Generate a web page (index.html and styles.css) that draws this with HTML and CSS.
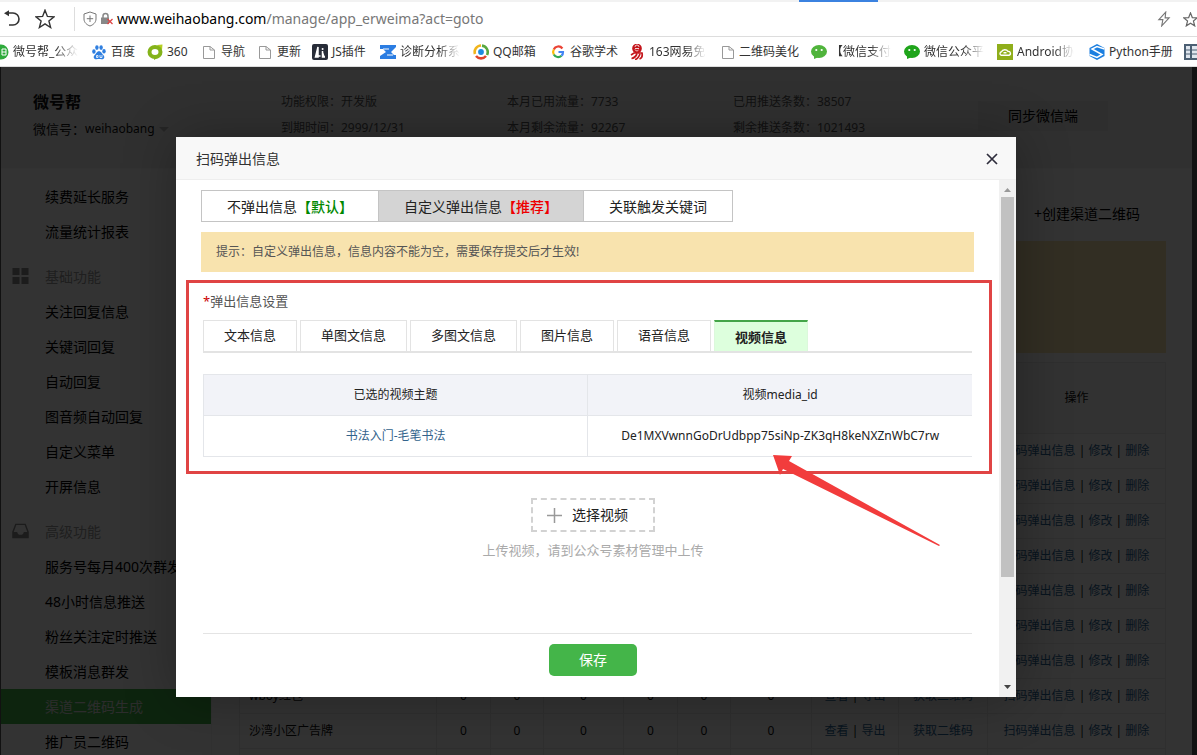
FILE: index.html
```html
<!DOCTYPE html>
<html lang="zh-CN">
<head>
<meta charset="utf-8">
<title>扫码弹出信息</title>
<link rel="stylesheet" href="styles.css">
</head>
<body>
<header class="browser">
  <div class="tabstrip"><span class="tabstrip-active"></span></div>
  <div class="address">
    <button class="icon-btn" aria-label="返回"><svg width="20" height="20" viewBox="0 0 20 20"><path d="M5 4H12a6 6 0 0 1 0 12H8" fill="none" stroke="#333" stroke-width="1.6"/><path d="M3 4.3L8 1.3V7.3Z" fill="#333"/></svg></button>
    <button class="icon-btn" aria-label="收藏"><svg width="20" height="20" viewBox="0 0 20 20"><path d="M10 1.2l2.4 6.2 6.600.4-5.100 4.200 1.700 6.500L10 14.900l-5.600 3.600 1.700-6.500L1 7.800l6.600-.4z" fill="none" stroke="#333" stroke-width="1.4"/></svg></button>
    <span class="divider"></span>
    <svg class="shield" width="14" height="16" viewBox="0 0 14 16"><path d="M7 1L13 3V8C13 11.500 10 14 7 15C4 14 1 11.500 1 8V3Z" fill="none" stroke="#777"/><path d="M7 4.500V11M3.800 7.700H10.200" stroke="#777"/></svg>
    <svg class="lock" width="14" height="14" viewBox="0 0 14 14"><path d="M3 6V4a2.500 2.500 0 0 1 5 0V6" fill="none" stroke="#888" stroke-width="1.500"/><rect x="1" y="5.500" width="8" height="6.500" fill="#888"/><path d="M7.500 7L12.500 12M12.500 7L7.500 12" stroke="#d44" stroke-width="1.300"/></svg>
    <span class="url"><b>www.weihaobang.com</b>/manage/app_erweima?act=goto</span>
    <svg class="flash" width="14" height="16" viewBox="0 0 12 14"><path d="M7.500 1L1.500 7.500H5L4 13L10.500 6H7Z" fill="none" stroke="#777"/></svg>
    <svg class="star-end" width="15" height="15" viewBox="0 0 20 20"><path d="M10 1.200l2.400 6.200 6.600.4-5.100 4.200 1.700 6.500L10 14.900l-5.600 3.600 1.700-6.500L1 7.800l6.600-.4z" fill="none" stroke="#666" stroke-width="1.600"/></svg>
  </div>
  <nav class="bookmarks">
    <a class="bm" href="#"><svg viewBox="0 0 16 16"><circle cx="8" cy="8" r="7.500" fill="#2eab3c"/><path d="M9 5h4v6H9zM9 8h4" fill="none" stroke="#fff"/></svg><span class="fade">微号帮_公众</span></a>
    <a class="bm" href="#"><svg viewBox="0 0 16 16" fill="#2f7fe0"><ellipse cx="2.900" cy="7.500" rx="1.700" ry="2.200"/><ellipse cx="5.900" cy="3.600" rx="1.700" ry="2.300"/><ellipse cx="10.100" cy="3.600" rx="1.700" ry="2.300"/><ellipse cx="13" cy="7.300" rx="1.700" ry="2.200"/><path d="M8 7.200C5.500 7.200 5.300 9.800 3.700 11C1.500 13 3.300 15.800 5.600 15.200C7.500 14.800 8.500 14.800 10.400 15.200C13 15.800 14.400 13 12.300 11C10.600 9.600 10.400 7.200 8 7.200Z"/><path d="M5.500 11.500h1.500v2H5.500zM9 11v2.500h2V11" fill="none" stroke="#fff" stroke-width=".8"/></svg><span>百度</span></a>
    <a class="bm" href="#"><svg viewBox="0 0 16 16"><path d="M10 1L15.500 .5L15 6Z" fill="#b6cf22"/><ellipse cx="8" cy="8" rx="5.500" ry="5" fill="#fff" stroke="#84b31a" stroke-width="4"/><path d="M7 13L7 16L12 13Z" fill="#84b31a"/></svg><span>360</span></a>
    <a class="bm" href="#"><svg viewBox="0 0 16 16"><path d="M2.500 2.500H9L13.500 6V14.500H2.500ZM9 2.500V6H13.500" fill="#fff" stroke="#999"/></svg><span>导航</span></a>
    <a class="bm" href="#"><svg viewBox="0 0 16 16"><path d="M2.500 2.500H9L13.500 6V14.500H2.500ZM9 2.500V6H13.500" fill="#fff" stroke="#999"/></svg><span>更新</span></a>
    <a class="bm" href="#"><svg viewBox="0 0 16 16"><rect width="16" height="16" rx="2" fill="#272c38"/><path d="M3.500 13L6 3V13ZM6 12H8.500M10.500 7V13H13" stroke="#fff" stroke-width="1.500" fill="#fff"/><circle cx="10.600" cy="5" r="1" fill="#fff"/></svg><span>JS插件</span></a>
    <a class="bm" href="#"><svg viewBox="0 0 16 16"><path d="M0 1H16V3L11 8L14 11H16V15H0V12L6 8L3 5H0Z" fill="#2b7de2"/><path d="M3 5H9M7 11H13" stroke="#fff"/></svg><span class="fade">诊断分析系</span></a>
    <a class="bm" href="#"><svg viewBox="0 0 16 16" fill="none" stroke-width="2.600"><circle cx="8" cy="8" r="2.900" fill="#1c8be0"/><path d="M2 10A6.500 6.500 0 0 1 8 1.500" stroke="#f1b51c"/><path d="M9 1.600A6.500 6.500 0 0 1 14 11" stroke="#58a83e"/><path d="M3 12A6.500 6.500 0 0 0 13 12" stroke="#df442c"/></svg><span>QQ邮箱</span></a>
    <a class="bm" href="#"><svg viewBox="0 0 16 16" fill="none" stroke-width="2.200"><path d="M12.400 4.500A5 5 0 0 0 3.800 5.500" stroke="#ea4335"/><path d="M3.800 5.500A5 5 0 0 0 3.800 10.500" stroke="#fbbc05"/><path d="M3.800 10.500A5 5 0 0 0 11.500 11.800" stroke="#34a853"/><path d="M11.500 11.800A5 5 0 0 0 13 8H8.500" stroke="#4285f4"/></svg><span>谷歌学术</span></a>
    <a class="bm" href="#"><svg viewBox="0 0 16 16" fill="none" stroke="#c4161c" stroke-width="1.700"><circle cx="8" cy="4.500" r="4" fill="#c4161c"/><path d="M6 4.500H10M6 3A2 2 0 0 1 10 3M6 5.500A2 2 0 0 0 9.500 6" stroke="#fff" stroke-width=".8"/><path d="M2 11L5 9H13Q14 14 10.500 15M8 10Q6 14 2.500 14.500M11 10Q9 15 6 15.500"/></svg><span class="fade">163网易免</span></a>
    <a class="bm" href="#"><svg viewBox="0 0 16 16"><path d="M3.500 2.500H10L14.500 6V14.500H3.500ZM10 2.500V6H14.500" fill="#fff" stroke="#999"/></svg><span>二维码美化</span></a>
    <a class="bm" href="#"><svg viewBox="0 0 16 16"><ellipse cx="8" cy="7.500" rx="8" ry="6.500" fill="#50b43c"/><path d="M3 11L3 15L8 13Z" fill="#50b43c"/><circle cx="5.300" cy="6" r="1.100" fill="#fff"/><circle cx="10.700" cy="6" r="1.100" fill="#fff"/></svg><span class="fade">【微信支付</span></a>
    <a class="bm" href="#"><svg viewBox="0 0 16 16"><ellipse cx="8" cy="7.500" rx="8" ry="6.500" fill="#1fa51b"/><path d="M3 11L3 15L8 13Z" fill="#1fa51b"/><circle cx="5.300" cy="6" r="1.100" fill="#fff"/><circle cx="10.700" cy="6" r="1.100" fill="#fff"/></svg><span class="fade">微信公众平</span></a>
    <a class="bm" href="#"><svg viewBox="0 0 16 16"><rect width="16" height="16" fill="#8fae1b"/><path d="M4 11.200A1.800 1.800 0 0 1 4.500 7.800A3.500 3 0 0 1 11 7.500A1.900 1.900 0 0 1 12 11.200ZM6.500 8.800H9.500" fill="none" stroke="#fff" stroke-width="1.400"/></svg><span class="fade">Android协</span></a>
    <a class="bm" href="#"><svg viewBox="0 0 16 16"><path d="M8 0L15.500 4V12L8 16L.5 12V4Z" fill="#1c7fe0"/><path d="M15.500 5L8 2.500L3 5L13 10.500L8 13.500L.5 10.500" fill="none" stroke="#fff" stroke-width="1.500"/></svg><span>Python手册</span></a>
    <a class="bm" href="#" aria-label="书签"><svg viewBox="0 0 16 16"><rect width="16" height="16" fill="#4b5f73"/><path d="M2 2h4v12H2zM8 2h6v12H8z" fill="#dfe6ee"/><path d="M2 6H14M2 10H14" stroke="#4b5f73"/></svg></a>
  </nav>
</header>

<div class="viewport">
  <div class="page">
    <section class="account">
      <div class="account-id"><h1>微号帮</h1><p>微信号：<span class="wxid">weihaobang</span> <span class="caret"></span></p></div>
      <dl><div>功能权限：开发版</div><div>到期时间：2999/12/31</div></dl>
      <dl><div>本月已用流量：7733</div><div>本月剩余流量：92267</div></dl>
      <dl><div>已用推送条数：38507</div><div>剩余推送条数：1021493</div></dl>
      <button class="sync">同步微信端</button>
    </section>
    <div class="columns">
      <nav class="side">
        <a href="#">续费延长服务</a>
        <a href="#">流量统计报表</a>
        <h2><svg width="16" height="16" viewBox="0 0 16 16" fill="#8a8a8a"><path d="M0 0h7v7H0zM9 0h7v7H9zM0 9h7v7H0zM9 9h7v7H9z"/></svg>基础功能</h2>
        <a href="#">关注回复信息</a>
        <a href="#">关键词回复</a>
        <a href="#">自动回复</a>
        <a href="#">图音频自动回复</a>
        <a href="#">自定义菜单</a>
        <a href="#">开屏信息</a>
        <h2><svg width="18" height="16" viewBox="0 0 18 16"><path d="M4 1H14L17 9V15H1V9Z" fill="none" stroke="#8a8a8a" stroke-width="1.500"/><path d="M1 9H5.500Q6 12 9 12T12.500 9H17V15H1Z" fill="#8a8a8a"/></svg>高级功能</h2>
        <a href="#">服务号每月400次群发</a>
        <a href="#">48小时信息推送</a>
        <a href="#">粉丝关注定时推送</a>
        <a href="#">模板消息群发</a>
        <a href="#" class="on">渠道二维码生成</a>
        <a href="#">推广员二维码</a>
      </nav>
      <main class="main">
        <div class="toolbar"><button class="create">+创建渠道二维码</button></div>
        <div class="notice"></div>
        <table class="list">
          <colgroup><col><col class="w54"><col class="w53"><col class="w80"><col class="w54"><col class="w53"><col class="w81"><col class="w87"><col class="w89"><col class="w178"></colgroup>
          <thead><tr><th></th><th></th><th></th><th></th><th></th><th></th><th></th><th></th><th></th><th>操作</th></tr></thead>
          <tbody>
            <tr><td></td><td></td><td></td><td></td><td></td><td></td><td></td><td></td><td></td><td><a href="#">扫码弹出信息</a> | <a href="#">修改</a> | <a href="#">删除</a></td></tr>
            <tr><td></td><td></td><td></td><td></td><td></td><td></td><td></td><td></td><td></td><td><a href="#">扫码弹出信息</a> | <a href="#">修改</a> | <a href="#">删除</a></td></tr>
            <tr><td></td><td></td><td></td><td></td><td></td><td></td><td></td><td></td><td></td><td><a href="#">扫码弹出信息</a> | <a href="#">修改</a> | <a href="#">删除</a></td></tr>
            <tr><td></td><td></td><td></td><td></td><td></td><td></td><td></td><td></td><td></td><td><a href="#">扫码弹出信息</a> | <a href="#">修改</a> | <a href="#">删除</a></td></tr>
            <tr><td></td><td></td><td></td><td></td><td></td><td></td><td></td><td></td><td></td><td><a href="#">扫码弹出信息</a> | <a href="#">修改</a> | <a href="#">删除</a></td></tr>
            <tr><td></td><td></td><td></td><td></td><td></td><td></td><td></td><td></td><td></td><td><a href="#">扫码弹出信息</a> | <a href="#">修改</a> | <a href="#">删除</a></td></tr>
            <tr><td></td><td></td><td></td><td></td><td></td><td></td><td></td><td></td><td></td><td><a href="#">扫码弹出信息</a> | <a href="#">修改</a> | <a href="#">删除</a></td></tr>
            <tr><td>wboy红包</td><td>0</td><td>0</td><td>0</td><td>0</td><td>0</td><td>0</td><td><a href="#">查看</a> | <a href="#">导出</a></td><td><a href="#">获取二维码</a></td><td><a href="#">扫码弹出信息</a> | <a href="#">修改</a> | <a href="#">删除</a></td></tr>
            <tr><td>沙湾小区广告牌</td><td>0</td><td>0</td><td>0</td><td>0</td><td>0</td><td>0</td><td><a href="#">查看</a> | <a href="#">导出</a></td><td><a href="#">获取二维码</a></td><td><a href="#">扫码弹出信息</a> | <a href="#">修改</a> | <a href="#">删除</a></td></tr>
            <tr><td></td><td></td><td></td><td></td><td></td><td></td><td></td><td></td><td></td><td></td></tr>
          </tbody>
        </table>
      </main>
    </div>
  </div>

  <div class="shade">
    <section class="dialog" role="dialog" aria-labelledby="dlg-title">
      <header class="dialog-head">
        <h2 id="dlg-title">扫码弹出信息</h2>
        <button class="close" aria-label="关闭"><svg width="12" height="12" viewBox="0 0 12 12"><path d="M1 1L11 11M11 1L1 11" stroke="#2e2d3c" stroke-width="1.700"/></svg></button>
      </header>
      <div class="dialog-body">
        <div class="content">
          <div class="segment">
            <button>不弹出信息<b class="green">【默认】</b></button>
            <button class="on">自定义弹出信息<b class="red">【推荐】</b></button>
            <button>关联触发关键词</button>
          </div>
          <p class="tip">提示：自定义弹出信息，信息内容不能为空，需要保存提交后才生效!</p>
          <div class="form">
            <p class="label"><i>*</i>弹出信息设置</p>
            <div class="tabs">
              <button>文本信息</button>
              <button>单图文信息</button>
              <button>多图文信息</button>
              <button>图片信息</button>
              <button>语音信息</button>
              <button class="on">视频信息</button>
            </div>
            <table class="media">
              <thead><tr><th>已选的视频主题</th><th>视频media_id</th></tr></thead>
              <tbody><tr><td><a href="#">书法入门-毛笔书法</a></td><td>De1MXVwnnGoDrUdbpp75siNp-ZK3qH8keNXZnWbC7rw</td></tr></tbody>
            </table>
            <div class="picker">
              <button class="pick"><svg width="15" height="15" viewBox="0 0 15 15"><path d="M7.500 0V15M0 7.500H15" stroke="#999" stroke-width="1.500"/></svg>选择视频</button>
              <p>上传视频，请到公众号素材管理中上传</p>
            </div>
            <div class="actions"><button class="save">保存</button></div>
          </div>
        </div>
        <div class="scroll">
          <svg width="9" height="5" viewBox="0 0 9 5"><path d="M1 5L4.500 1L8 5Z" fill="#999"/></svg>
          <span class="thumb"></span>
          <svg class="down" width="9" height="5" viewBox="0 0 9 5"><path d="M1 0L4.500 4L8 0Z" fill="#444"/></svg>
        </div>
      </div>
      <div class="mark"></div>
      <svg class="arrow" width="168" height="92" viewBox="0 0 168 92"><path d="M0 0L19 1L16 6L167 90L166 91L10 14L7 20Z" fill="#f23c3c"/></svg>
    </section>
  </div>
</div>
</body>
</html>
```

FILE: styles.css
```css
* { box-sizing: border-box; }
body, h1, h2, p, dl { margin: 0; }
body {
  display: flex;
  flex-direction: column;
  height: 100vh;
  overflow: hidden;
  background: #fff;
  color: #333;
  font-family: "Noto Sans", "Noto Sans CJK SC", sans-serif;
  font-size: 12px;
  line-height: 20px;
}
button { font: inherit; color: inherit; padding: 0; border: 0; background: none; }
a { color: inherit; text-decoration: none; }
table { border-collapse: collapse; width: 100%; table-layout: fixed; }
th { font-weight: normal; }

/* Browser bars */
.browser { flex: none; }
.tabstrip { display: flex; justify-content: flex-end; height: 2px; background: #f2f2f2; padding-right: 319px; }
.tabstrip-active { width: 79px; background: #3b82e0; }
.address { display: flex; align-items: center; height: 35px; border-bottom: 1px solid #ddd; overflow: hidden; }
.icon-btn { display: flex; margin-left: 1px; margin-right: 13px; }
.divider { width: 1px; height: 24px; margin-left: 6px; background: #ddd; }
.shield { margin-left: 8px; }
.lock { margin: 0 3px; }
.url { flex: 1; font-size: 14px; color: #777; }
.url b { font-weight: normal; color: #000; }
.flash { margin-right: 12px; }
.star-end { flex: none; margin-right: -1px; }
.bookmarks {
  display: grid;
  grid-template-columns: 98px 56px 54px 56px 55px 68px 93px 77px 79px 90px 92px 93px 93px 92px 95px 16px;
  height: 30px;
  margin-left: -7px;
  align-items: center;
  border-bottom: 1px solid #ddd;
  overflow: hidden;
}
.bm { display: flex; align-items: center; gap: 4px; white-space: nowrap; }
.bm svg { flex: none; width: 16px; height: 16px; }
.bm .fade { mask-image: linear-gradient(to right, #000 65%, transparent); }

/* Page behind the dialog */
.viewport { position: relative; flex: 1; min-height: 0; background: #121212; padding-right: 5px; overflow: hidden; }
.page { background: #fff; border-left: 1px solid #555; }
.account { display: flex; height: 102px; padding: 25px 0 0 32px; background: #f0f0f0; border-bottom: 1px solid #fafafa; }
.account-id { width: 248px; color: #111; font-size: 13px; line-height: 34px; }
.account-id h1 { font-size: 16px; line-height: 20px; }
.account-id p { display: flex; align-items: center; gap: 4px; }
.wxid { font-size: 12px; margin-left: -4px; }
.caret { border: 5px solid transparent; border-top-color: #bbb; border-bottom: 0; }
.account dl { width: 226px; line-height: 26px; margin-top: -3px; color: #555; }
.sync { width: 130px; height: 30px; margin: 9px 0 0 19px; background: #e4e4e4; color: #000; font-size: 14px; }
.columns { display: flex; }
.side { flex: none; width: 211px; padding-top: 10px; border-right: 1px solid #f2f2f2; font-size: 14px; line-height: 35px; }
.side a { display: block; height: 35px; padding-left: 44px; color: #000; white-space: nowrap; }
.side h2 { display: flex; align-items: center; gap: 16px; height: 35px; margin-top: 10px; padding-left: 11px; color: #999; font-size: 14px; font-weight: normal; }
.side h2 svg { width: 17px; margin-bottom: 2px; }
.side .on { background: #44b549; color: #ddd; }
.main { flex: 1; min-width: 0; padding: 30px 26px 0 27px; }
.toolbar { display: flex; justify-content: flex-end; height: 42px; padding-right: 26px; }
.create { height: 30px; color: #000; font-size: 14px; }
.notice { height: 112px; background: #f8e3ae; margin-bottom: 9px; }
.list { color: #111; }
.list th, .list td { height: 35px; padding: 0; border: 1px solid #e9e9e9; text-align: center; white-space: nowrap; }
.list th { height: 71px; background: #f8f8f8; }
.list td:first-child { padding-left: 9px; text-align: left; }
.list a { color: #2a6496; }
.w53 { width: 53px; }
.w54 { width: 54px; }
.w80 { width: 80px; }
.w81 { width: 81px; }
.w87 { width: 87px; }
.w89 { width: 89px; }
.w178 { width: 178px; }

/* Dialog */
.shade { position: absolute; inset: 0 5px 0 0; display: flex; justify-content: center; align-items: flex-start; padding-top: 70px; background: rgba(0, 0, 0, .8); }
.dialog { position: relative; display: flex; flex-direction: column; width: 840px; height: 560px; background: #fff; box-shadow: 1px 1px 50px rgba(0, 0, 0, .3); }
.dialog-head { display: flex; align-items: center; justify-content: space-between; height: 43px; padding: 2px 18px 0 20px; background: #f8f8f8; border-bottom: 1px solid #eee; }
.dialog-head h2 { font-size: 14px; font-weight: normal; }
.close { display: flex; }
.dialog-body { display: flex; flex: 1; min-height: 0; }
.content { flex: 1; min-width: 0; padding: 10px 25px 0; }
.segment { display: flex; width: max-content; height: 32px; border: 1px solid #c4c4c4; font-size: 14px; }
.segment button { padding: 2px 25px 0; color: #222; }
.segment button + button { border-left: 1px solid #c4c4c4; }
.segment .on { background: #d4d4d4; }
.segment b { font-weight: 500; }
.green { color: #080; }
.red { color: #e00; }
.tip { height: 40px; margin-top: 10px; padding-left: 15px; background: #f8e3ae; color: #555; line-height: 40px; }
.form { padding: 19px 2px 0; }
.label { color: #555; font-size: 13px; }
.label i { color: #c00; font-style: normal; }
.tabs { display: flex; gap: 3px; height: 33px; margin-top: 9px; border-bottom: 2px solid #e3e3e3; font-size: 13px; }
.tabs button { padding: 0 20px 2px; border: 1px solid #e3e3e3; border-bottom: 0; color: #222; }
.tabs .on { padding-bottom: 0; border-color: #dcf8dc; border-top: 2px solid #44a549; background: #dfd; font-weight: bold; }
.media { margin-top: 21px; border-left: 1px solid #e4e6ea; }
.media th, .media td { height: 41px; padding: 0; border: 1px solid #e4e6ea; border-right: 0; color: #222; text-align: center; }
.media th { background: #f2f3f8; }
.media a { color: #33638c; }
.picker { display: flex; flex-direction: column; align-items: center; gap: 8px; height: 177px; padding: 41px 0 0 11px; border-bottom: 1px solid #e4e4e4; color: #aaa; font-size: 13px; }
.pick { display: flex; align-items: center; gap: 10px; height: 34px; padding: 0 25px 0 14px; border: 2px dashed #d2d2d2; color: #222; font-size: 14px; }
.actions { display: flex; justify-content: center; padding: 10px 0 0 11px; }
.save { width: 88px; height: 32px; border-radius: 5px; background: #44b549; color: #fff; font-size: 14px; }
.scroll { display: flex; flex-direction: column; align-items: center; width: 17px; padding: 7px 0; background: #f1f1f1; }
.thumb { width: 13px; height: 380px; margin-top: 5px; background: #c1c1c1; }
.down { margin-top: auto; }

/* Callout drawn over the dialog */
.mark { position: absolute; left: 10px; top: 143px; width: 806px; height: 194px; border: 3px solid #e04444; pointer-events: none; }
.arrow { position: absolute; left: 597px; top: 318px; pointer-events: none; }
```
